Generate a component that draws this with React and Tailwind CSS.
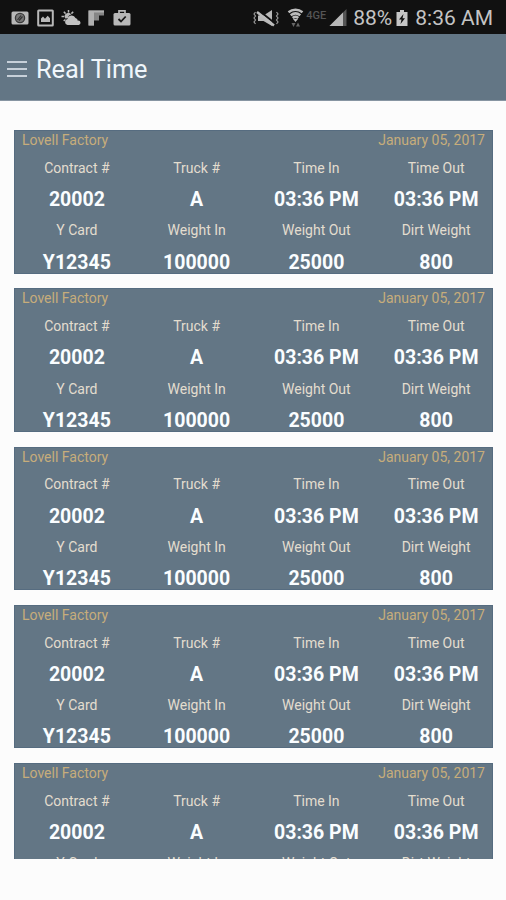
const TICKETS = Array.from({ length: 5 }, (_, index) => ({
  id: index + 1,
  factory: 'Lovell Factory',
  date: 'January 05, 2017',
  contract: '20002',
  truck: 'A',
  timeIn: '03:36 PM',
  timeOut: '03:36 PM',
  card: 'Y12345',
  weightIn: '100000',
  weightOut: '25000',
  dirtWeight: '800',
}))

function NotificationIcons() {
  return (
    <div className="flex items-center pl-[11px]">
      <svg className="w-[18px] h-[18px] shrink-0" viewBox="0 0 18 18" fill="none">
        <rect x="0.5" y="2.5" width="17" height="13" rx="1.5" fill="#b8b8b8" />
        <circle cx="9" cy="9" r="4.6" fill="#777" stroke="#3a3a3a" strokeWidth="1.3" />
        <path d="M6.5 11 10 6.5M8 11.5l3.5-4" stroke="#333" strokeWidth="1.2" />
      </svg>
      <svg className="w-[17px] h-[18px] shrink-0 ml-[8px]" viewBox="0 0 17 18" fill="none">
        <rect x="1.2" y="1.5" width="14.6" height="15" rx="0.5" stroke="#b8b8b8" strokeWidth="2" />
        <path d="M4 13V9.5l2-2 2 2.2 2.7-3L13 9.3V13z" fill="#b8b8b8" />
      </svg>
      <svg className="w-[20px] h-[18px] shrink-0 ml-[7px]" viewBox="0 0 20 18" fill="none">
        <path d="M7.5 1v2.5M2.8 2.8l1.8 1.8M.5 7.5h2.7M12.2 2.8l-1.8 1.8M2.7 12l1.7-1.5" stroke="#b8b8b8" strokeWidth="1.5" />
        <path d="M4.3 9.5a3.5 3.5 0 1 1 6-3.9C8.3 6 7.2 7.3 6.8 9.3z" fill="#b8b8b8" />
        <path d="M6.5 16a3 3 0 0 1 0-5.9 4.2 4.2 0 0 1 8-1.1 2.8 2.8 0 0 1 2.3 2.7 2.2 2.2 0 0 1 1 4.3z" fill="#c2c2c2" />
      </svg>
      <svg className="w-[17px] h-[18px] shrink-0 ml-[7px]" viewBox="0 0 17 18">
        <path d="M.5 1.5H16v5h-5v5H6v5H.5z" fill="#858585" />
        <path d="M.5 1.5H16v2H6v13H.5z" fill="#b0b0b0" />
      </svg>
      <svg className="w-[18px] h-[18px] shrink-0 ml-[8px]" viewBox="0 0 18 18" fill="none">
        <path d="M6 4.5V1.8h6v2.7" stroke="#b8b8b8" strokeWidth="1.7" />
        <rect x="0.5" y="4" width="17" height="12.5" rx="1.5" fill="#b8b8b8" />
        <path d="m5.5 10 2.5 2.5 4.7-5" stroke="#181818" strokeWidth="1.8" />
      </svg>
    </div>
  )
}

function SystemStatus() {
  return (
    <div className="flex items-center pr-[13px] text-[#c4c4c4]">
      <svg className="w-[26px] h-[18px] shrink-0" viewBox="0 0 26 18" fill="none">
        <path d="M2.5 3 1 5l1.5 2L1 9l1.5 2L1 13l1.5 2M23.5 3 25 5l-1.5 2L25 9l-1.5 2 1.5 2-1.5 2" stroke="#9a9a9a" strokeWidth="1.2" />
        <path d="M5 6.500h5.500L19 1v16l-8.500-5H5z" fill="#b8b8b8" />
        <path d="M6 1.500 22 14.500" stroke="#111" strokeWidth="2" />
        <path d="M4 3 21 16.500" stroke="#bcbcbc" strokeWidth="2.500" />
      </svg>
      <svg className="w-[17px] h-[20px] shrink-0 ml-[8px]" viewBox="0 0 17 20" fill="none">
        <path d="M1.500 4.200a11.500 11.500 0 0 1 14 0M3.700 7.200a8 8 0 0 1 9.600 0M5.700 10a4.500 4.500 0 0 1 5.600 0" stroke="#bdbdbd" strokeWidth="2.500" />
        <path d="M6 11h5l-2.500 3z" fill="#bdbdbd" />
        <path d="m4.500 15 2 4 2-4zM9 18.500l2-4 2 4z" fill="#666" />
      </svg>
      <span className="w-[22px] ml-[2px] mb-[5px] text-[11px] leading-none font-medium text-[#555] whitespace-nowrap">4GE</span>
      <svg className="w-[18px] h-[18px] shrink-0 ml-px" viewBox="0 0 18 18">
        <path d="M17.5 0v17H.5z" fill="#555" />
        <path d="M14 3.5V17H.5z" fill="#b8b8b8" />
      </svg>
      <span className="ml-[6px] mt-[2px] text-[21px] leading-none">88%</span>
      <svg className="w-[12px] h-[18px] shrink-0 ml-[4px]" viewBox="0 0 12 18">
        <path d="M4 1h4v2h3.5v14H.5V3H4z" fill="#c6c6c6" />
        <path d="M7.5 5 3 10.5h2.5L4.500 15 9 9.300H6.500z" fill="#111" />
      </svg>
      <span className="ml-[7px] mt-[2px] text-[21px] leading-none whitespace-nowrap">8:36 AM</span>
    </div>
  )
}

function StatusBar() {
  return (
    <div className="flex items-center justify-between h-[34px] pt-px bg-[#111111] shrink-0">
      <NotificationIcons />
      <SystemStatus />
    </div>
  )
}

function Header() {
  return (
    <header className="flex items-center h-[67px] pt-[3px] pl-[7px] bg-[#637685] border-b border-[#8795a2] shrink-0">
      <button type="button" className="flex flex-col gap-[5px] w-[20px]" aria-label="Menu">
        <span className="block h-[2px] w-full bg-[#c7d0d9]" />
        <span className="block h-[2px] w-full bg-[#c7d0d9]" />
        <span className="block h-[2px] w-full bg-[#c7d0d9]" />
      </button>
      <h1 className="ml-[9px] mt-[2px] text-[25.3px] leading-none text-[#f0f6fb]">Real Time</h1>
    </header>
  )
}

function Field({ label, value }) {
  return (
    <div className="text-center whitespace-nowrap">
      <div className="h-[31.25px] leading-[30.25px] text-[14px] text-[#e3ddcf]">{label}</div>
      <div className="h-[31.25px] leading-[31.25px] text-[19.5px] font-bold text-[#fafdff]">{value}</div>
    </div>
  )
}

function TicketCard({ ticket }) {
  return (
    <div className="h-[143.5px] shrink-0 overflow-hidden bg-[#637685] border border-[#566c80]">
      <div className="flex justify-between h-[21.75px] px-[7px] leading-[19px] text-[14px] text-[#c7ad7b]">
        <span>{ticket.factory}</span>
        <span>{ticket.date}</span>
      </div>
      <div className="grid grid-cols-4 ml-[2px] mr-[-4px]">
        <Field label="Contract #" value={ticket.contract} />
        <Field label="Truck #" value={ticket.truck} />
        <Field label="Time In" value={ticket.timeIn} />
        <Field label="Time Out" value={ticket.timeOut} />
        <Field label="Y Card" value={ticket.card} />
        <Field label="Weight In" value={ticket.weightIn} />
        <Field label="Weight Out" value={ticket.weightOut} />
        <Field label="Dirt Weight" value={ticket.dirtWeight} />
      </div>
    </div>
  )
}

export default function App() {
  return (
    <div className="flex flex-col w-[506px] h-[900px] overflow-hidden bg-[#fcfcfc] font-['Roboto',sans-serif]">
      <StatusBar />
      <Header />
      <main className="flex flex-col gap-[14.75px] h-[728.5px] mt-[29px] ml-[14px] mr-[13px] overflow-hidden">
        {TICKETS.map(ticket => (
          <TicketCard key={ticket.id} ticket={ticket} />
        ))}
      </main>
    </div>
  )
}
